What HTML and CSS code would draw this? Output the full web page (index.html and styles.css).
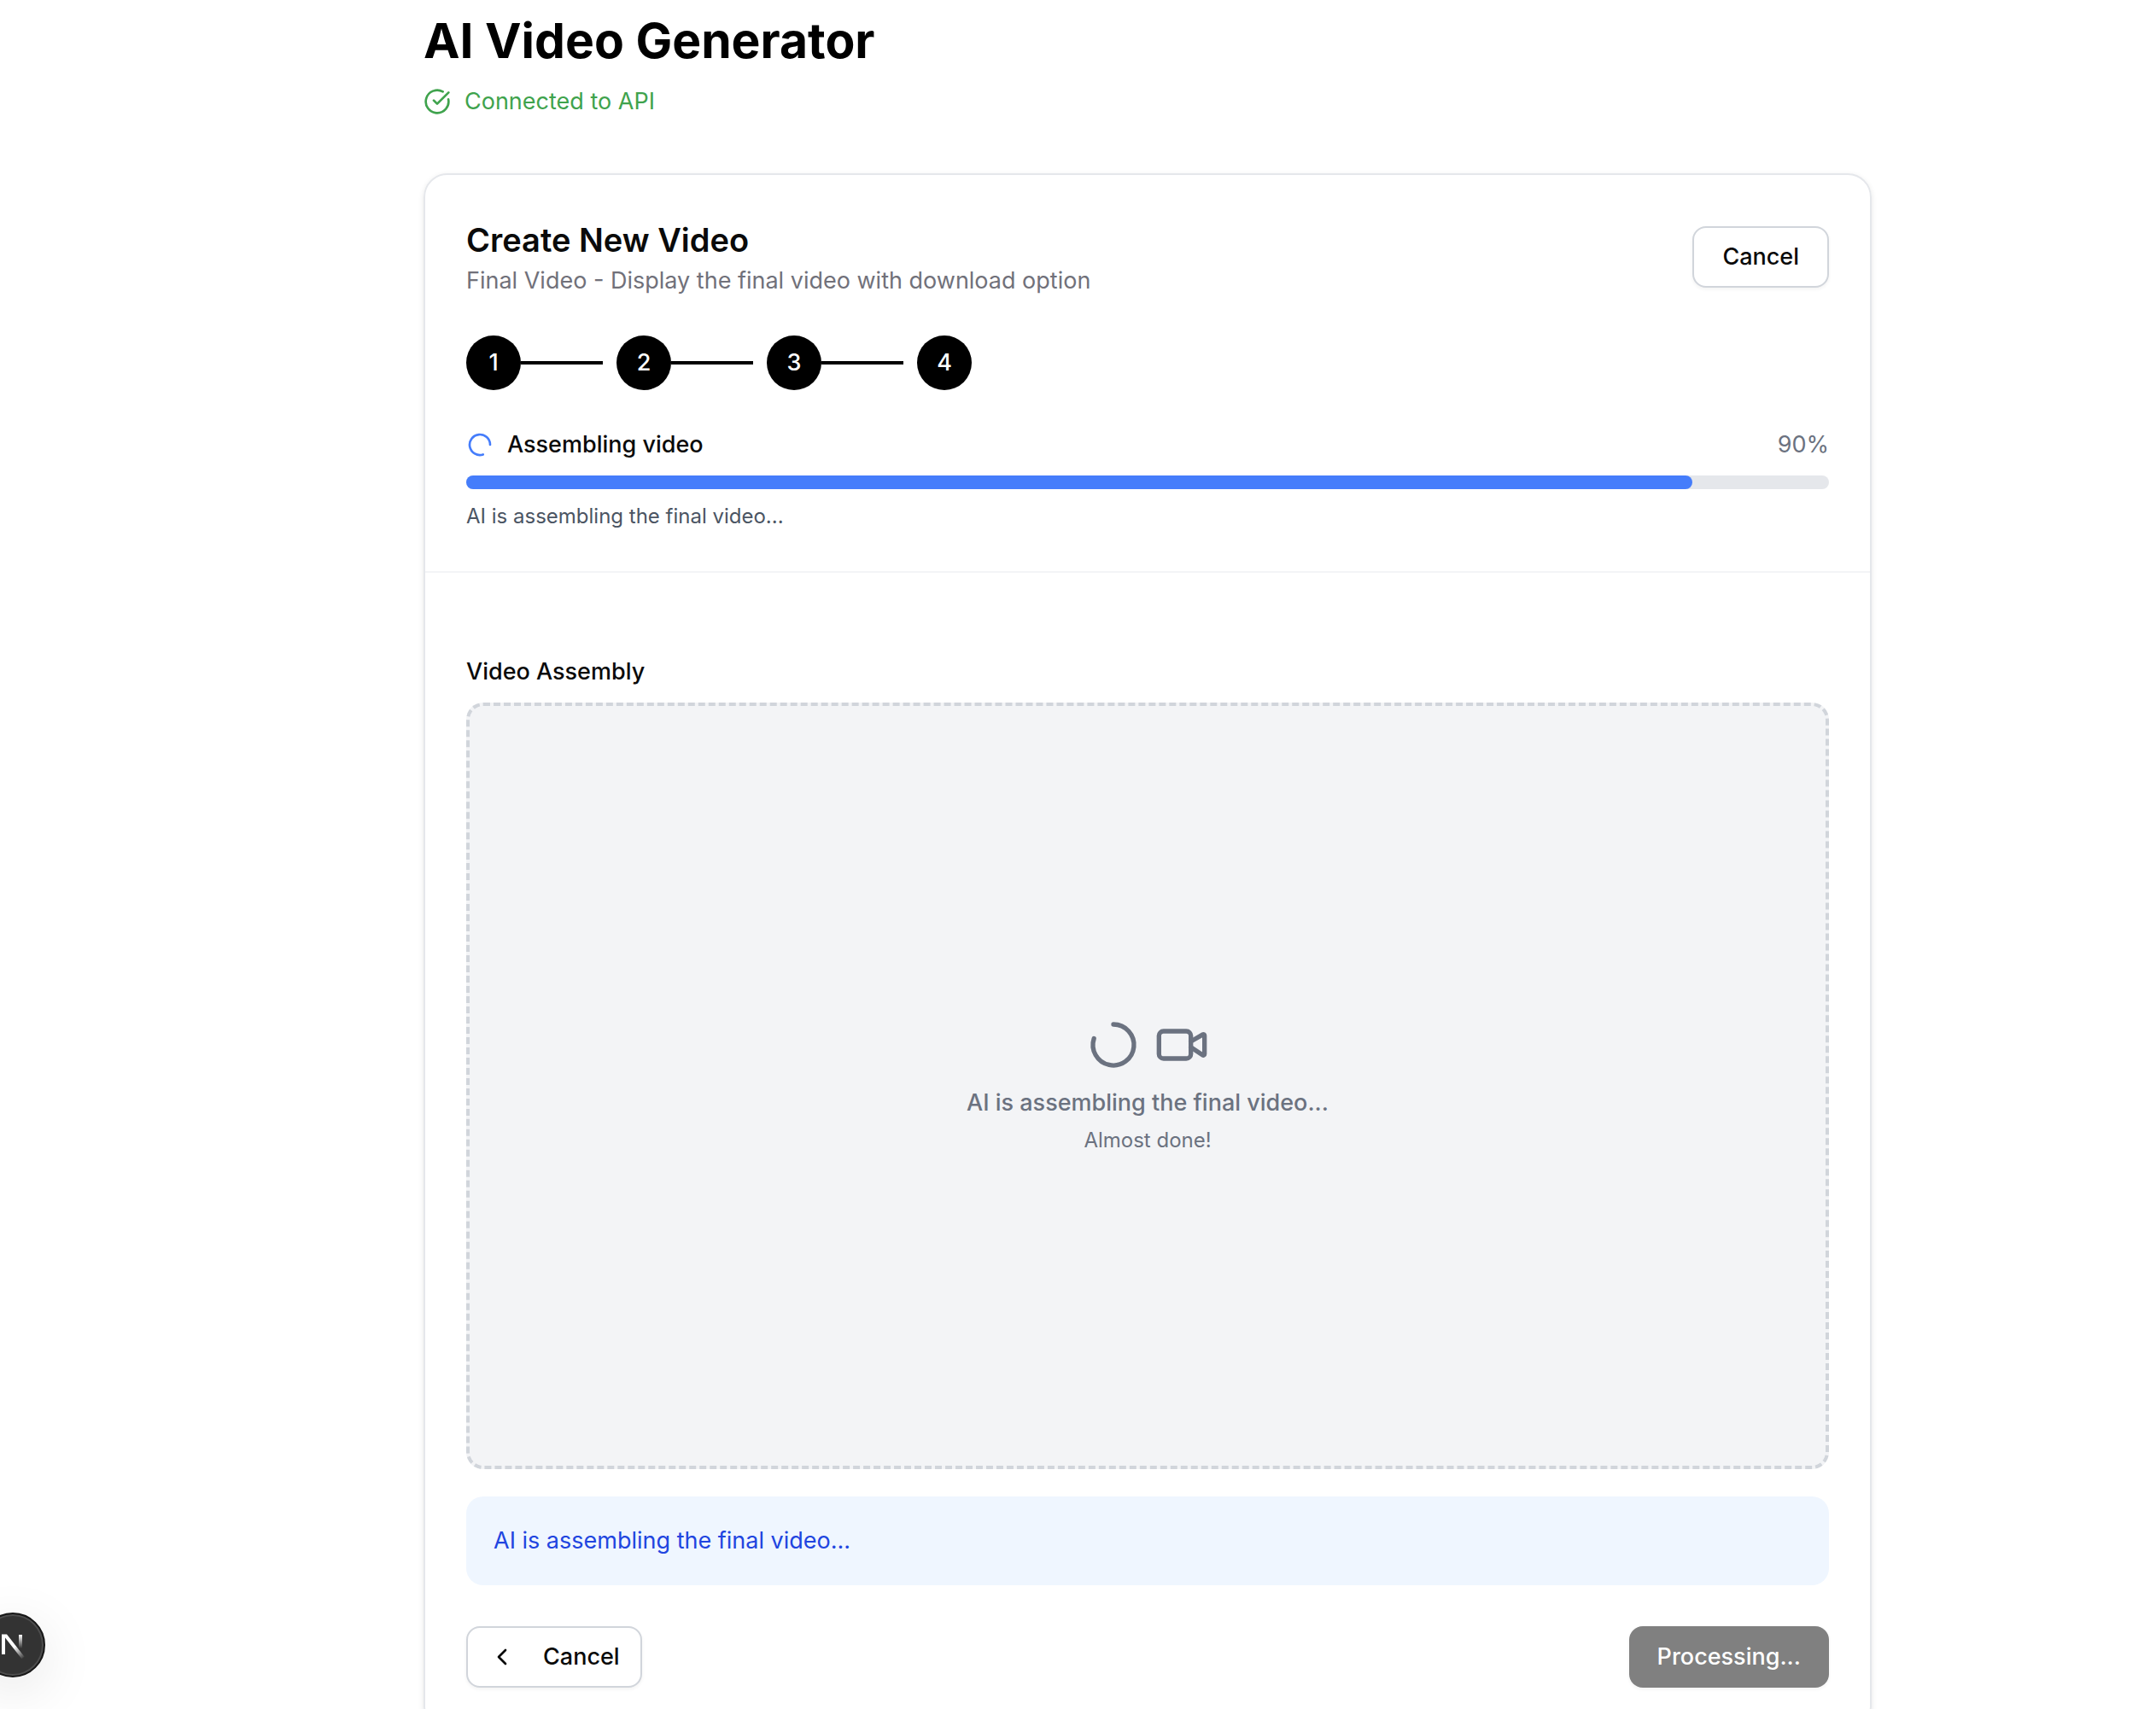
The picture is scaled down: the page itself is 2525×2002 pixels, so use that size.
FILE: index.html
```html
<!DOCTYPE html>
<html lang="en">
<head>
<meta charset="utf-8">
<meta name="viewport" content="width=device-width, initial-scale=1">
<title>AI Video Generator</title>
<link rel="stylesheet" href="styles.css">
</head>
<body>
<main class="page">
  <header class="page-header">
    <h1 class="page-title">AI Video Generator</h1>
    <p class="status">
      <svg class="icon" viewBox="0 0 24 24" aria-hidden="true"><path d="M21.801 10A10 10 0 1 1 17 3.335"/><path d="m9 11 3 3L22 4"/></svg>
      <span>Connected to API</span>
    </p>
  </header>

  <section class="card">
    <header class="card-header">
      <div class="card-top">
        <div>
          <h2 class="card-title">Create New Video</h2>
          <p class="card-subtitle">Final Video - Display the final video with download option</p>
        </div>
        <button class="button" type="button">Cancel</button>
      </div>

      <ol class="steps">
        <li class="step">1</li>
        <li class="step">2</li>
        <li class="step">3</li>
        <li class="step">4</li>
      </ol>

      <div class="progress">
        <div class="progress-row">
          <svg class="icon icon-blue" viewBox="0 0 24 24" aria-hidden="true"><path transform="rotate(72 12 12)" d="M21 12a9 9 0 1 1-6.219-8.56"/></svg>
          <span class="progress-label">Assembling video</span>
          <span class="progress-value">90%</span>
        </div>
        <div class="track" role="progressbar" aria-label="Assembling video" aria-valuenow="90" aria-valuemin="0" aria-valuemax="100">
          <div class="fill" style="width: 90%"></div>
        </div>
        <p class="progress-note">AI is assembling the final video...</p>
      </div>
    </header>

    <div class="card-body">
      <h3 class="section-title">Video Assembly</h3>
      <div class="preview">
        <div class="preview-icons">
          <svg class="icon icon-large" viewBox="0 0 24 24" aria-hidden="true"><path transform="rotate(-90 12 12)" d="M21 12a9 9 0 1 1-6.219-8.56"/></svg>
          <svg class="icon icon-large" viewBox="0 0 24 24" aria-hidden="true"><path d="m16 13 5.223 3.482a.5.5 0 0 0 .777-.416V7.87a.5.5 0 0 0-.752-.432L16 10.5"/><rect x="2" y="6" width="14" height="12" rx="2"/></svg>
        </div>
        <p class="preview-text">AI is assembling the final video...</p>
        <p class="preview-note">Almost done!</p>
      </div>
      <p class="notice">AI is assembling the final video...</p>
      <div class="actions">
        <button class="button button-back" type="button">
          <svg class="icon" viewBox="0 0 24 24" aria-hidden="true"><path d="m15 18-6-6 6-6"/></svg>
          Cancel
        </button>
        <button class="button button-primary" type="button" disabled>Processing...</button>
      </div>
    </div>
  </section>
</main>

<button class="dev-badge" type="button" aria-label="Open developer tools">
  <svg class="dev-logo" viewBox="0 0 40 40" aria-hidden="true">
    <defs>
      <linearGradient id="stem" x1="0" y1="8" x2="0" y2="24" gradientUnits="userSpaceOnUse"><stop stop-color="#fff"/><stop offset="1" stop-color="#fff" stop-opacity="0"/></linearGradient>
      <linearGradient id="slash" x1="22" y1="22" x2="33" y2="36" gradientUnits="userSpaceOnUse"><stop stop-color="#fff"/><stop offset="1" stop-color="#fff" stop-opacity="0"/></linearGradient>
    </defs>
    <path d="M9 31V9.500H12L32 35" fill="none" stroke="url(#slash)" stroke-width="4"/>
    <path d="M29 8V24" fill="none" stroke="url(#stem)" stroke-width="4"/>
  </svg>
</button>
</body>
</html>
```
FILE: styles.css
```css
* {
  box-sizing: border-box;
  margin: 0;
  padding: 0;
}

html {
  overflow: hidden;
}

body {
  background: #fff;
  color: #0a0a0a;
  font-family: Inter, "Liberation Sans", sans-serif;
  font-size: 27px;
  line-height: 40px;
}

.page {
  max-width: 1792px;
  margin-left: 448px;
  padding: 12px 48px 48px;
}

.icon {
  width: 32px;
  height: 32px;
  flex: none;
  fill: none;
  stroke: currentColor;
  stroke-width: 2;
  stroke-linecap: round;
  stroke-linejoin: round;
}

.icon-blue {
  color: #457dfb;
}

.icon-large {
  width: 64px;
  height: 64px;
}

.page-header {
  display: flex;
  flex-direction: column;
  gap: 15px;
  margin-bottom: 64px;
}

.page-title {
  color: #000;
  font-size: 57px;
  font-weight: 700;
  line-height: 72px;
}

.status {
  display: flex;
  align-items: center;
  gap: 16px;
  color: #3fa34d;
}

.card {
  border: 2px solid #e5e7eb;
  border-radius: 28px;
  box-shadow: 0 2px 6px rgba(0, 0, 0, 0.1);
}

.card-header {
  display: flex;
  flex-direction: column;
  gap: 44px;
  padding: 48px;
  border-bottom: 2px solid #f3f4f6;
}

.card-top {
  display: flex;
  align-items: center;
  justify-content: space-between;
}

.card-title {
  font-size: 38px;
  font-weight: 600;
  line-height: 56px;
}

.card-subtitle {
  color: #71717a;
}

.button {
  display: inline-flex;
  align-items: center;
  justify-content: center;
  height: 72px;
  padding: 0 33px;
  border: 2px solid #d1d5db;
  border-radius: 16px;
  background: #fff;
  box-shadow: 0 2px 4px rgba(0, 0, 0, 0.05);
  color: #0a0a0a;
  font: inherit;
  font-weight: 500;
}

.button-back {
  padding: 0 24px;
  gap: 32px;
}

.button-primary {
  border: 0;
  background: #808080;
  color: #fff;
}

.steps {
  display: flex;
  gap: 112px;
  list-style: none;
}

.step {
  position: relative;
  width: 64px;
  height: 64px;
  border-radius: 50%;
  background: #000;
  color: #fff;
  font-weight: 500;
  line-height: 64px;
  text-align: center;
}

.step:not(:last-child)::after {
  content: "";
  position: absolute;
  top: 30px;
  left: 100%;
  width: 96px;
  height: 4px;
  background: #000;
}

.progress {
  display: flex;
  flex-direction: column;
  gap: 16px;
}

.progress-row {
  display: flex;
  align-items: center;
  gap: 16px;
}

.progress-label {
  flex: 1;
  font-weight: 500;
}

.progress-value {
  color: #6b7280;
}

.track {
  height: 16px;
  border-radius: 8px;
  background: #e5e7eb;
}

.fill {
  height: 100%;
  border-radius: 8px;
  background: #457dfb;
}

.progress-note {
  color: #4b5563;
  font-size: 24px;
  line-height: 32px;
}

.card-body {
  padding: 96px 48px 48px;
}

.section-title {
  margin-bottom: 16px;
  font-size: 27px;
  font-weight: 500;
}

.preview {
  display: flex;
  flex-direction: column;
  align-items: center;
  justify-content: center;
  aspect-ratio: 16 / 9;
  border: 4px dashed #d1d5db;
  border-radius: 20px;
  background: #f3f4f6;
  color: #6b7280;
}

.preview-icons {
  display: flex;
  gap: 16px;
  margin-bottom: 16px;
}

.preview-text {
  margin-bottom: 8px;
  font-weight: 500;
}

.preview-note {
  font-size: 24px;
  line-height: 32px;
}

.notice {
  margin-top: 32px;
  padding: 32px;
  border-radius: 20px;
  background: #eff6ff;
  color: #2145e0;
}

.actions {
  display: flex;
  justify-content: space-between;
  margin-top: 48px;
}

.dev-badge {
  position: fixed;
  left: -23px;
  bottom: 37px;
  width: 76px;
  height: 76px;
  border: 2px solid #171717;
  border-radius: 50%;
  background: #333;
  box-shadow: inset 0 0 0 2px #4d4d4d, 0 16px 64px rgba(0, 0, 0, 0.1);
}

.dev-logo {
  display: block;
  width: 40px;
  height: 40px;
  margin: 0 auto;
}
```
